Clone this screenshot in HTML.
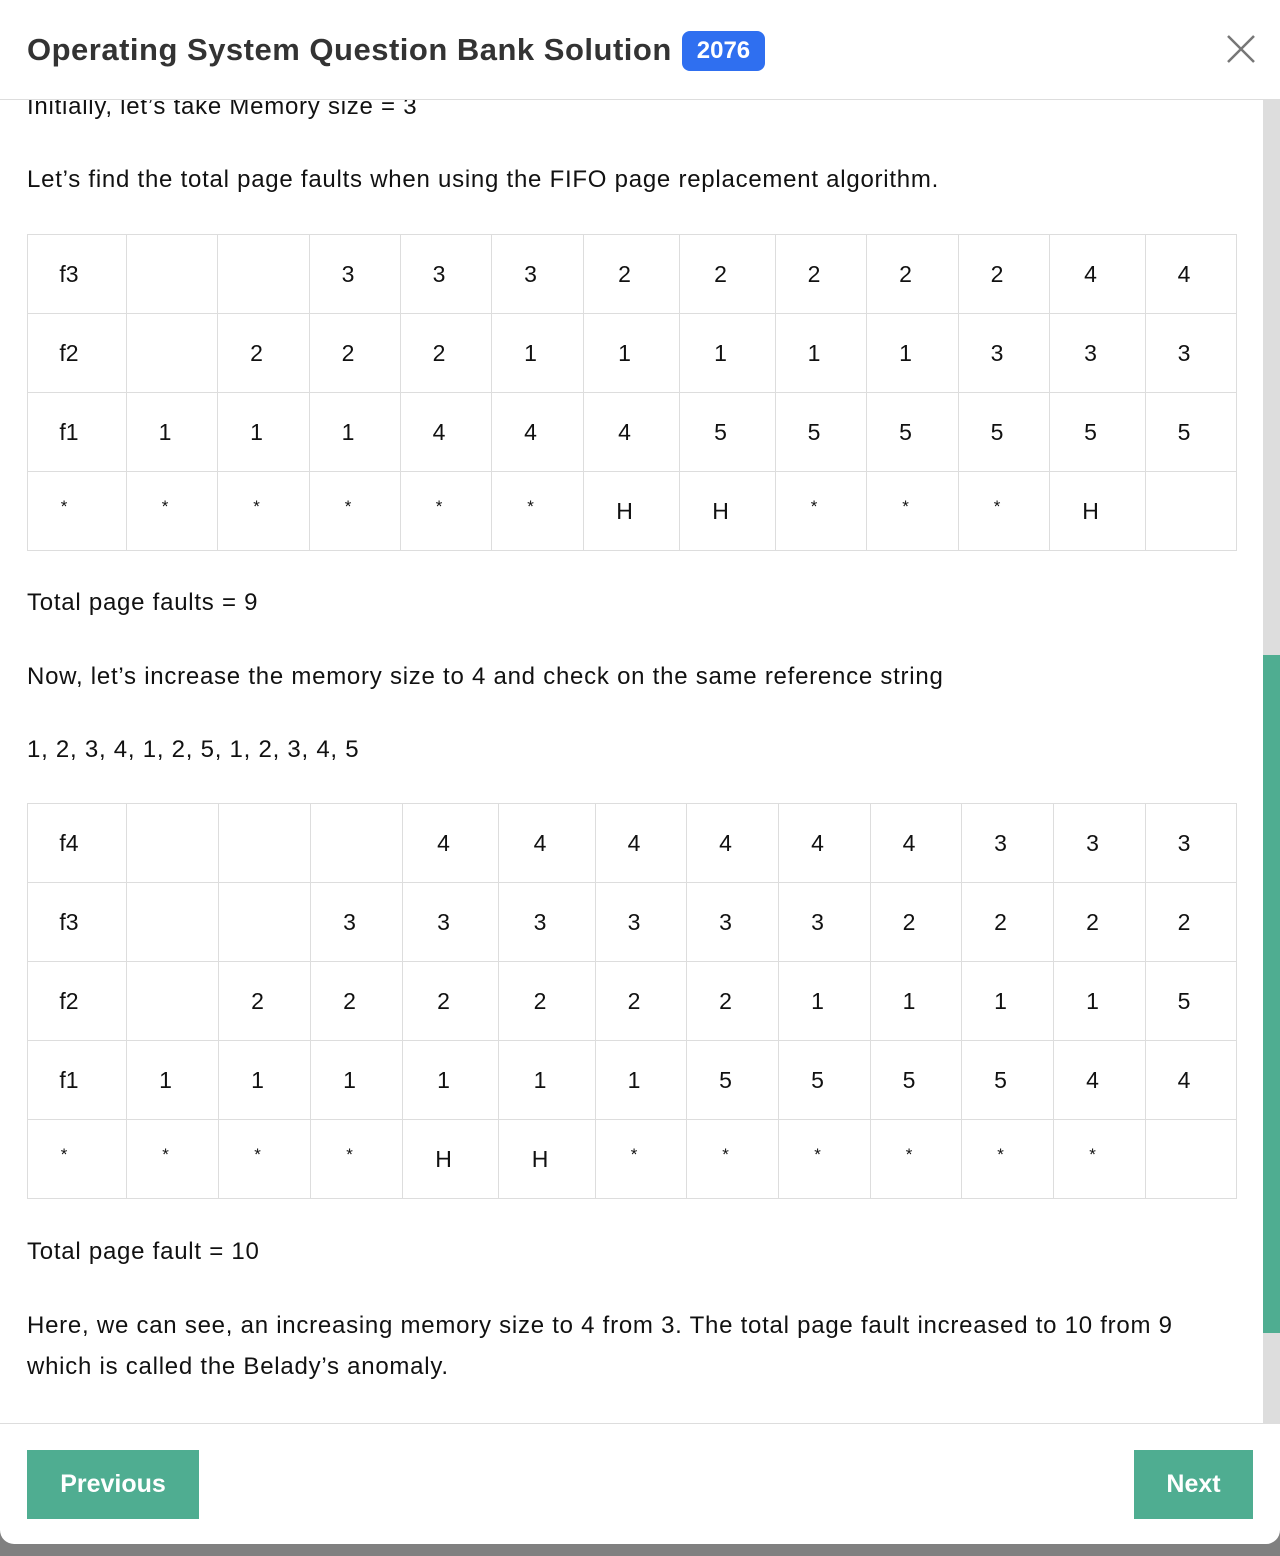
<!DOCTYPE html>
<html><head><style>
*{box-sizing:border-box;margin:0;padding:0}
body{width:1280px;height:1556px;background:#808080;font-family:"Liberation Sans",Arial,sans-serif;overflow:hidden;position:relative}
.modal{position:absolute;left:0;top:0;width:1280px;height:1544px;background:#fff;border-radius:0 0 14px 14px;overflow:hidden}
.hdr{position:absolute;left:0;top:0;width:1280px;height:100px;border-bottom:1px solid #ddd;background:#fff;z-index:2}
.hdr h1{position:absolute;left:27px;top:31px;font-size:31px;font-weight:bold;color:#333;letter-spacing:0.5px}
.badge{display:inline-block;background:#2f6ff0;color:#fff;font-size:24px;padding:6px 15px;border-radius:8px;margin-left:10px;vertical-align:2px;letter-spacing:0}
.close{position:absolute;left:1226px;top:34px}
.body{position:absolute;left:0;top:100px;width:1263px;height:1323px;overflow:hidden}
.sb{position:absolute;left:1263px;top:100px;width:17px;height:1323px;background:#ddd}
.thumb{position:absolute;left:0;top:555px;width:17px;height:678px;background:#4fad91}
p{position:absolute;left:27px;font-size:24px;color:#111;line-height:41px;letter-spacing:0.75px;white-space:nowrap}
table{position:absolute;left:27px;border-collapse:collapse;font-size:23px;color:#111;table-layout:fixed}
td{border:1px solid #ddd;height:79px;text-align:center;padding:0 14px 0 0}
td.f{padding-right:16px}
td.s{font-size:17px;vertical-align:middle;padding-bottom:8px}
.ftr{position:absolute;left:0;top:1423px;width:1280px;height:121px;border-top:1px solid #ddd}
.btn{position:absolute;top:26px;height:69px;background:#4fad91;color:#fff;font-weight:bold;font-size:25px;line-height:69px;text-align:center}
</style></head><body>
<div class="modal">
<div class="hdr"><h1>Operating System Question Bank Solution<span class="badge">2076</span></h1>
<svg class="close" width="30" height="30" viewBox="0 0 30 30"><path d="M2 2L28 28M28 2L2 28" stroke="#777" stroke-width="2.5"/></svg></div>
<div class="body">
<p style="top:-14px">Initially, let’s take Memory size = 3</p>
<p style="top:59px">Let’s find the total page faults when using the FIFO page replacement algorithm.</p>
<table style="top:134px;width:1209px">
<colgroup><col style="width:99px"><col style="width:91px"><col style="width:92px"><col style="width:91px"><col style="width:91px"><col style="width:92px"><col style="width:96px"><col style="width:96px"><col style="width:91px"><col style="width:92px"><col style="width:91px"><col style="width:96px"><col style="width:91px"></colgroup>
<tr><td class="f">f3</td><td></td><td></td><td>3</td><td>3</td><td>3</td><td>2</td><td>2</td><td>2</td><td>2</td><td>2</td><td>4</td><td>4</td></tr>
<tr><td class="f">f2</td><td></td><td>2</td><td>2</td><td>2</td><td>1</td><td>1</td><td>1</td><td>1</td><td>1</td><td>3</td><td>3</td><td>3</td></tr>
<tr><td class="f">f1</td><td>1</td><td>1</td><td>1</td><td>4</td><td>4</td><td>4</td><td>5</td><td>5</td><td>5</td><td>5</td><td>5</td><td>5</td></tr>
<tr><td class="s" style="padding-right:26px">*</td><td class="s">*</td><td class="s">*</td><td class="s">*</td><td class="s">*</td><td class="s">*</td><td>H</td><td>H</td><td class="s">*</td><td class="s">*</td><td class="s">*</td><td>H</td><td></td></tr>
</table>
<p style="top:482px">Total page faults = 9</p>
<p style="top:556px">Now, let’s increase the memory size to 4 and check on the same reference string</p>
<p style="top:629px">1, 2, 3, 4, 1, 2, 5, 1, 2, 3, 4, 5</p>
<table style="top:703px;width:1209px">
<colgroup><col style="width:99px"><col style="width:92px"><col style="width:92px"><col style="width:92px"><col style="width:96px"><col style="width:97px"><col style="width:91px"><col style="width:92px"><col style="width:92px"><col style="width:91px"><col style="width:92px"><col style="width:92px"><col style="width:91px"></colgroup>
<tr><td class="f">f4</td><td></td><td></td><td></td><td>4</td><td>4</td><td>4</td><td>4</td><td>4</td><td>4</td><td>3</td><td>3</td><td>3</td></tr>
<tr><td class="f">f3</td><td></td><td></td><td>3</td><td>3</td><td>3</td><td>3</td><td>3</td><td>3</td><td>2</td><td>2</td><td>2</td><td>2</td></tr>
<tr><td class="f">f2</td><td></td><td>2</td><td>2</td><td>2</td><td>2</td><td>2</td><td>2</td><td>1</td><td>1</td><td>1</td><td>1</td><td>5</td></tr>
<tr><td class="f">f1</td><td>1</td><td>1</td><td>1</td><td>1</td><td>1</td><td>1</td><td>5</td><td>5</td><td>5</td><td>5</td><td>4</td><td>4</td></tr>
<tr><td class="s" style="padding-right:26px">*</td><td class="s">*</td><td class="s">*</td><td class="s">*</td><td>H</td><td>H</td><td class="s">*</td><td class="s">*</td><td class="s">*</td><td class="s">*</td><td class="s">*</td><td class="s">*</td><td></td></tr>
</table>
<p style="top:1131px">Total page fault = 10</p>
<p style="top:1205px">Here, we can see, an increasing memory size to 4 from 3. The total page fault increased to 10 from 9<br>which is called the Belady’s anomaly.</p>
</div>
<div class="sb"><div class="thumb"></div></div>
<div class="ftr">
<div class="btn" style="left:27px;width:172px">Previous</div>
<div class="btn" style="left:1134px;width:119px">Next</div>
</div>
</div>
</body></html>
